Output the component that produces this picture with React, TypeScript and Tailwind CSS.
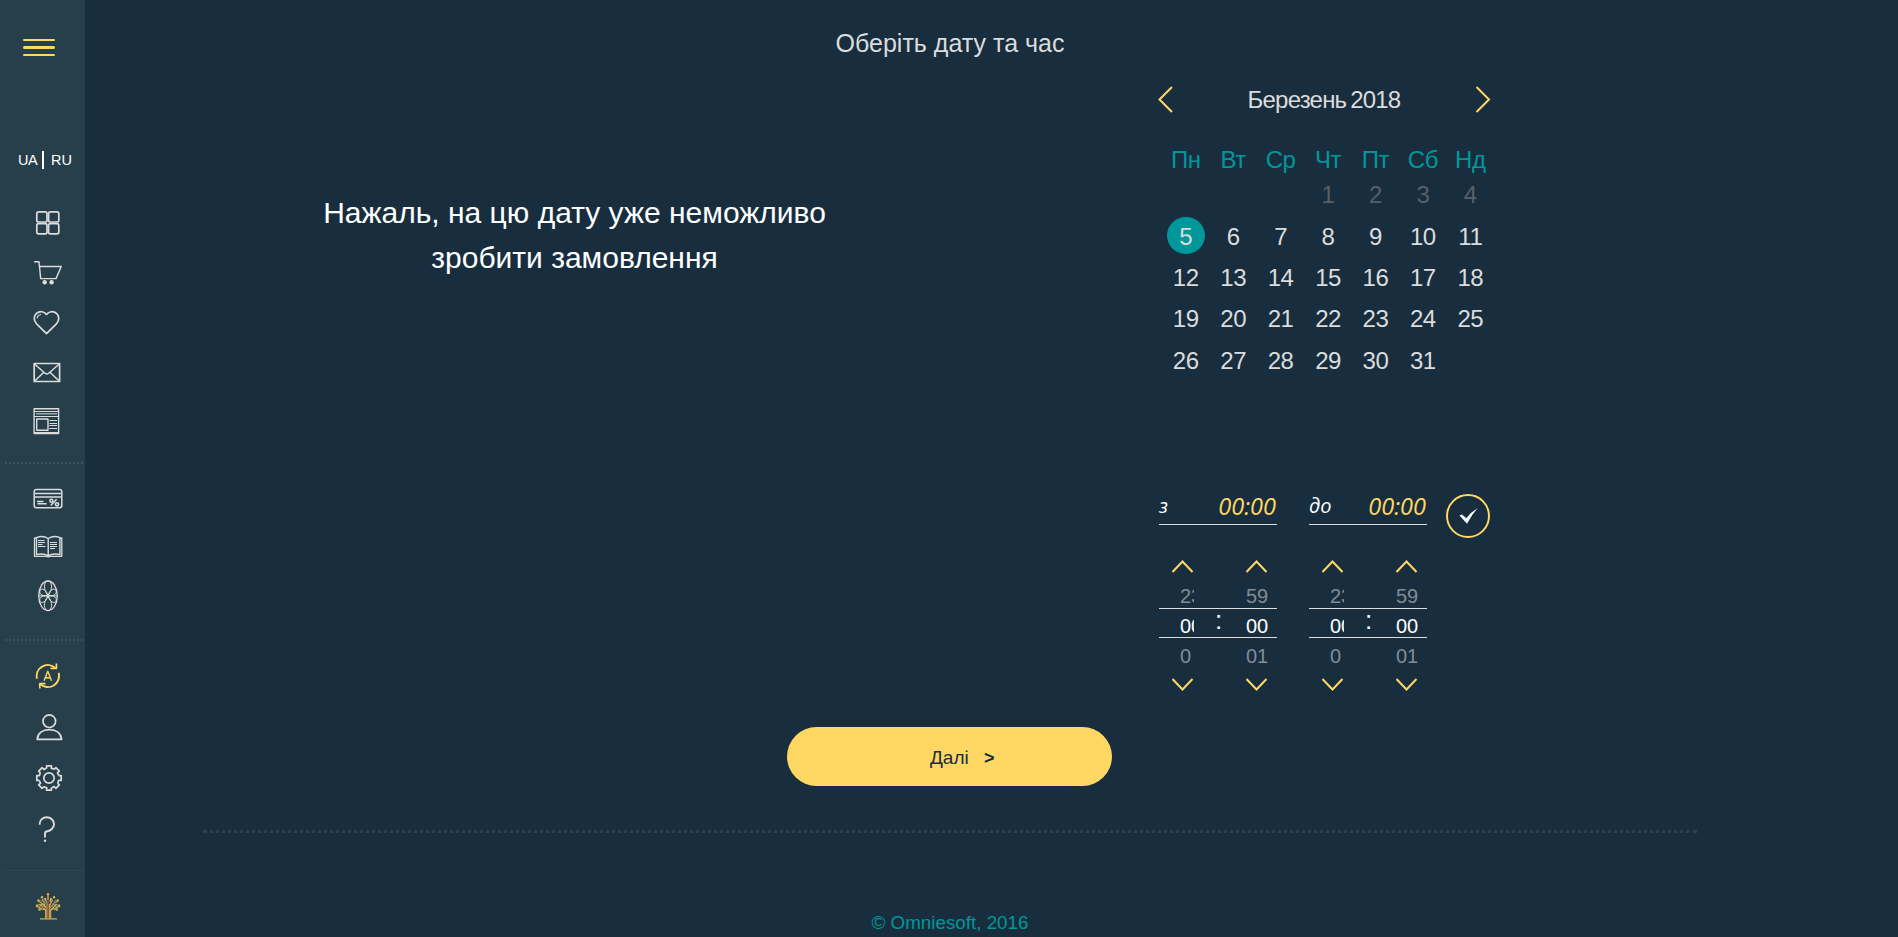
import type { ReactNode } from "react";

const WEEKDAYS = ["Пн", "Вт", "Ср", "Чт", "Пт", "Сб", "Нд"];

const WEEKS: (number | null)[][] = [
  [null, null, null, 1, 2, 3, 4],
  [5, 6, 7, 8, 9, 10, 11],
  [12, 13, 14, 15, 16, 17, 18],
  [19, 20, 21, 22, 23, 24, 25],
  [26, 27, 28, 29, 30, 31, null],
];

const TODAY = 5;

function Icon({ className, children }: { className: string; children: ReactNode }) {
  return (
    <svg
      viewBox="0 0 32 32"
      className={`ml-8 block size-8 shrink-0 ${className}`}
      fill="none"
      stroke="currentColor"
      strokeWidth="1.7"
      strokeLinejoin="round"
    >
      {children}
    </svg>
  );
}

function Dots({ className }: { className: string }) {
  return (
    <svg className={`block h-[2px] shrink-0 ${className}`} stroke="currentColor">
      <line x1="0" y1="1" x2="100%" y2="1" strokeWidth="2" strokeDasharray="2 2" />
    </svg>
  );
}

function Sidebar() {
  const teeth = [0, 45, 90, 135, 180, 225, 270, 315];
  return (
    <aside className="flex h-[937px] w-[85px] shrink-0 flex-col bg-[#263f4a] text-[#dcdcdc]">
      <button className="mt-[39px] ml-[23px] flex h-[17px] w-8 shrink-0 flex-col justify-between">
        <span className="h-[2px] w-full rounded-full bg-[#ffd763]" />
        <span className="h-[3px] w-full rounded-full bg-[#ffd763]" />
        <span className="h-[2px] w-full rounded-full bg-[#ffd763]" />
      </button>
      <div className="mt-[95px] ml-[18px] flex h-[18px] shrink-0 items-center text-[14.5px] leading-[18px] text-white">
        <span className="w-6 tracking-[-0.4px]">UA</span>
        <span className="mr-[7px] h-[18px] w-[2px] bg-white" />
        <span>RU</span>
      </div>

      <Icon className="mt-[38px]">
        <rect x="4.8" y="4.8" width="10.2" height="10.2" rx="1.8" />
        <rect x="16.6" y="4.8" width="10.2" height="10.2" rx="1.8" />
        <rect x="4.8" y="16.6" width="10.2" height="10.2" rx="1.8" />
        <rect x="16.6" y="16.6" width="10.2" height="10.2" rx="1.8" />
      </Icon>
      <Icon className="mt-[17px]">
        <path d="M2.2 5.8H7L8.7 22.6H24L29.2 10.5H7.6" strokeWidth="1.4" />
        <circle cx="12.7" cy="26.3" r="2.2" fill="currentColor" stroke="none" />
        <circle cx="19.6" cy="26.3" r="2.2" fill="currentColor" stroke="none" />
      </Icon>
      <Icon className="mt-[18px]">
        <path d="M14.5 27.6 4.6 17.8C1 14 2 9.6 4.5 7.4 7.6 4.7 12.3 5.3 14.5 8.4 16.7 5.3 21.4 4.7 24.5 7.4 27 9.6 28 14 24.4 17.8Z" />
        <path d="M5.2 12.2C5.4 10 6.8 8.700 9 8.500" strokeWidth="1.200" />
      </Icon>
      <Icon className="mt-[18px]">
        <rect x="2.200" y="7.500" width="25.400" height="18" />
        <path d="M2.500 8 13 17.200Q14.800 18.600 16.600 17.200L27.400 8M2.500 25.200 11.800 16.300M27.400 25.200 18 16.300" strokeWidth="1.500" />
      </Icon>
      <Icon className="mt-[17px]">
        <rect x="2.100" y="3.800" width="24.500" height="24.700" strokeWidth="1.400" />
        <path d="M2 6.500H26.500M4 8.800H25M2 11.500H26.500M17.500 15.500H25M17.500 18.500H25M17.500 20.500H25M17.500 23.500H25M2 27.500H26.500" strokeWidth="1" />
        <rect x="4.700" y="14" width="11.300" height="11.300" strokeWidth="1.400" />
      </Icon>

      <Dots className="mt-[25px] ml-[5px] w-[78px] text-[#3c545f]" />

      <Icon className="mt-[18px]">
        <rect x="2.200" y="7.600" width="27.600" height="18.200" rx="2.200" strokeWidth="1.500" />
        <path d="M2.200 11.400H29.800M2.200 15H29.800" strokeWidth="1.500" />
        <path d="M5 19.500H11.500M5.500 21.800H14.700" strokeWidth="1.400" />
        <path d="M18.800 23.500 24.600 17.200" strokeWidth="1.500" />
        <circle cx="19.400" cy="18.700" r="1.500" strokeWidth="1.400" />
        <circle cx="25" cy="22.300" r="1.600" strokeWidth="1.600" />
      </Icon>
      <Icon className="mt-[16px]">
        <path d="M4.500 8H2.500V26.300H14.500L16 26.800 17.800 26.300H29.800V8H27.800" strokeWidth="1.300" />
        <path d="M16.200 8.500C12.500 6.200 8 6.200 4.500 7.600V24.600C8.500 23.700 12.500 23.700 16.200 25.700 19.900 23.700 24 23.700 27.900 24.600V7.600C24.300 6.200 19.900 6.200 16.200 8.500ZV25.500" strokeWidth="1.400" />
        <path d="M6 10.500H12.500M6 12.500H13M6 14.500H10.500M6 16.500H13.500M18 12.500H25M18 14.500H25M18 16.500H25M18 18.500H23" strokeWidth="1" />
      </Icon>
      <Icon className="mt-[18px]">
        <ellipse cx="16" cy="15.800" rx="9.300" ry="14.800" strokeWidth="1.300" />
        <g strokeWidth="1">
          <path d="M16 15.800C10.500 8 12 2 16 1 20 2 21.500 8 16 15.800ZM16 15.800C10.500 23.600 12 29.600 16 30.600 20 29.600 21.500 23.600 16 15.800Z" />
          <path d="M16 15.800C14 8.500 9.500 8.500 8.300 9.800 6.500 13 9 16.500 16 15.800ZM16 15.800C18 8.500 22.500 8.500 23.700 9.800 25.500 13 23 16.500 16 15.800ZM16 15.800C14 23.100 9.500 23.100 8.300 21.800 6.500 18.600 9 15.100 16 15.800ZM16 15.800C18 23.100 22.500 23.100 23.700 21.800 25.500 18.600 23 15.100 16 15.800Z" />
          <path d="M7 15.800H25" />
        </g>
      </Icon>

      <Dots className="mt-[27px] ml-[5px] w-[78px] text-[#3c545f]" />

      <Icon className="mt-[19px] text-[#ffd763]">
        <path d="M4.900 18.800A11.200 11.200 0 0 1 23.300 7.900M26.700 12.800A11.200 11.200 0 0 1 8.300 24.100" strokeWidth="1.900" />
        <path d="M24.400 3.600V8.400H18.500M7.800 28.600V23.700H13.500" strokeWidth="1.700" />
        <path d="M12.100 20.800 15.800 11.300 19.500 20.800M13.400 17.800H18.200" strokeWidth="1.400" />
      </Icon>
      <Icon className="mt-[19px]">
        <circle cx="17.300" cy="10.200" r="6.300" />
        <path d="M5.200 28.300C5.800 22.300 10.500 18.700 17.400 18.700S29 22.300 29.600 28.300Z" />
      </Icon>
      <Icon className="mt-[19px]">
        <circle cx="17" cy="16" r="5.200" />
        {teeth.map((angle) => (
          <path
            key={angle}
            transform={`rotate(${angle} 17 16)`}
            d="M14.600 6.400V3.800H19.400V6.400Q20.700 6.600 22.100 7.300"
          />
        ))}
      </Icon>
      <Icon className="mt-[19px]">
        <path d="M7.600 11.700C7.600 7 10.800 4.200 14.800 4.200S22 7.300 22 11.200 18.500 17.700 15.300 18.200Q13 18.500 13 20.500V24.500" strokeWidth="1.900" />
        <circle cx="13" cy="27.800" r="1.200" fill="currentColor" stroke="none" />
      </Icon>

      <svg className="mt-[25px] ml-1 block h-px w-[79px] shrink-0 text-[#3a525c]" stroke="currentColor">
        <line x1="0" y1="0.5" x2="100%" y2="0.5" strokeDasharray="1 1" />
      </svg>

      <Icon className="mt-[19px] text-[#d9b350]">
        <path d="M8 28.900H25" strokeWidth="1.200" />
        <path d="M13.600 28.500V20L8 15M15 28.500V12M17.300 28.500V14M18.700 28.500V20L24 15" strokeWidth="1.100" />
        <path d="M16.200 28V6" stroke="#b04c4c" strokeWidth="1.100" />
        <path d="M14 20 10 19 5 16.500M14 18 9 12.500 6 11.500M13.500 17.500 10.500 9M18.500 20 23 18.500 27 16.500M18 18 22 13 26 11.500M17.500 16 20.500 9.500M16 10V4M11 15 6.500 14.500M21 15 25.500 14.500M14.500 12 13 8M18 12 19 8" strokeWidth="1.200" />
        <path d="M15 15 11.500 10M19.500 16.500 24 9.500M9 14V9.500M11 19.300 7.500 20M21 19.200 24.500 20M4.500 14 8 17M28 14.500 23 17" stroke="#5c9b6f" strokeWidth="1.100" />
        <path d="M12 17.500 8.500 17M20 17.500 23.500 12.500M13 13.500 11 12" stroke="#c25b50" strokeWidth="1" />
        <g fill="currentColor" stroke="none">
          <circle cx="16" cy="4.200" r="1.200" />
          <circle cx="10" cy="7.200" r="1.200" />
          <circle cx="22" cy="7.200" r="1.200" />
          <circle cx="6.500" cy="10.500" r="1.200" />
          <circle cx="25.700" cy="10.500" r="1.200" />
          <circle cx="4.900" cy="16" r="1.200" />
          <circle cx="27.200" cy="16" r="1.200" />
          <circle cx="7.500" cy="19.500" r="1.200" />
          <circle cx="24.800" cy="19.500" r="1.200" />
          <circle cx="13" cy="9" r="1.100" />
          <circle cx="19" cy="9" r="1.100" />
        </g>
      </Icon>
    </aside>
  );
}

function Calendar() {
  return (
    <section className="w-[334px] text-2xl text-[#dcdcdc]">
      <div className="flex h-[27px] items-center justify-between text-[#ffd763]">
        <svg className="h-[27px] w-4" viewBox="0 0 16 27" fill="none" stroke="currentColor" strokeWidth="2">
          <path d="M15 1 2.500 13.500 15 26" />
        </svg>
        <h2 className="text-2xl tracking-[-0.8px] text-[#dcdcdc] [word-spacing:-2px]">Березень 2018</h2>
        <svg className="h-[27px] w-4" viewBox="0 0 16 27" fill="none" stroke="currentColor" strokeWidth="2">
          <path d="M1.500 1 14 13.500 1.500 26" />
        </svg>
      </div>
      <div className="mt-[29px] ml-[5px] grid w-[332px] grid-cols-7 text-center tracking-[-0.5px]">
        {WEEKDAYS.map((d) => (
          <div key={d} className="h-[35px] leading-[35px] text-[#00979a]">
            {d}
          </div>
        ))}
        {WEEKS.map((week, w) =>
          week.map((day, i) => (
            <div
              key={`${w}-${i}`}
              className={`flex items-center justify-center ${w === 0 ? "h-[39px] pb-1 text-[#55606b]" : "h-[41.4px]"}`}
            >
              {day === TODAY ? (
                <span className="-mt-[2px] flex h-[37px] w-[38px] items-center justify-center rounded-full bg-[#00979a] pt-[2px]">
                  {day}
                </span>
              ) : (
                day
              )}
            </div>
          )),
        )}
      </div>
    </section>
  );
}

function Chevron({ down }: { down?: boolean }) {
  return (
    <svg
      className="block h-[13px] w-[22px] shrink-0 text-[#ffd763]"
      viewBox="0 0 22 13"
      fill="none"
      stroke="currentColor"
      strokeWidth="2"
    >
      <path d={down ? "M0.500 1 10.500 11.500 20.500 1" : "M0.500 12 10.500 1.500 20.500 12"} />
    </svg>
  );
}

function Reel({ values, clipped }: { values: string[]; clipped?: boolean }) {
  return (
    <div className="flex w-[22px] flex-col">
      <Chevron />
      <div
        className={`mt-[8px] text-xl leading-[30px] text-[#818c95] ${clipped ? "ml-[8px] w-[14px] overflow-hidden" : ""}`}
      >
        <div className="h-[30px]">{values[0]}</div>
        <div className="h-[30px] text-white">{values[1]}</div>
        <div className="h-[30px]">{values[2]}</div>
      </div>
      <div className="mt-[7px]">
        <Chevron down />
      </div>
    </div>
  );
}

function TimePicker({ label }: { label: string }) {
  return (
    <div className="w-[118px]">
      <div className="flex h-[35px] items-start justify-between border-b border-[#dcdcdc] font-['Open_Sans',sans-serif] italic">
        <span className="text-xl leading-[32px] font-medium text-white">{label}</span>
        <span className="mr-[1px] text-[23.5px] leading-[32px] text-[#ffd763]">00:00</span>
      </div>
      <div className="relative mt-[35px] flex justify-between pr-[9px] pl-[13px]">
        <Reel values={["23", "00", "0"]} clipped />
        <span className="mt-[45px] mr-[3px] text-[26px] leading-[30px] text-white">:</span>
        <Reel values={["59", "00", "01"]} />
        <div className="absolute top-[48px] left-0 h-[30px] w-full border-y border-[#dcdcdc]" />
      </div>
    </div>
  );
}

export default function App() {
  return (
    <div className="flex h-[937px] w-[1898px] overflow-hidden bg-[#182e3e] font-['Liberation_Sans',Arial,sans-serif]">
      <Sidebar />
      <main className="flex flex-1 flex-col">
        <h1 className="mt-[27px] mr-[83px] text-center text-[25px] leading-8 text-[#dcdcdc]">Оберіть дату та час</h1>
        <div className="flex h-[668px]">
          <p className="mt-[131px] ml-[203px] w-[573px] text-center text-[30px] leading-[45px] text-white">
            Нажаль, на цю дату уже неможливо <br />
            зробити замовлення
          </p>
          <div className="mt-[27px] ml-[296px] flex flex-col">
            <div className="h-[404px]">
              <Calendar />
            </div>
            <div className="ml-[2px] flex items-start">
              <TimePicker label="з" />
              <div className="ml-8">
                <TimePicker label="до" />
              </div>
              <button className="mt-1 ml-[19px] flex size-11 items-center justify-center rounded-full border-2 border-[#ffd763]">
                <svg className="h-4 w-[19px] text-white" viewBox="0 0 19 16" fill="currentColor">
                  <path d="M0.500 7.500 3 6.500 7.300 10.300Q12 4 18.500 0.300 12.500 7 8 15.700Z" />
                </svg>
              </button>
            </div>
          </div>
        </div>
        <button className="ml-[702px] flex h-[59px] w-[325px] shrink-0 items-center rounded-[30px] bg-[#ffd763] pt-[3px] pl-[143px] text-[19px] text-[#182e3e]">
          <span className="w-[54px] text-left">Далі</span>
          <span className="text-[18px] font-bold">&gt;</span>
        </button>
        <div className="mt-[44px] ml-[118px] w-[1494px] shrink-0 border-t-[3px] border-dotted border-[#2c414f]" />
        <footer className="mt-[78px] mr-[83px] text-center text-[18.8px] leading-6 text-[#00979a]">
          © Omniesoft, 2016
        </footer>
      </main>
    </div>
  );
}
